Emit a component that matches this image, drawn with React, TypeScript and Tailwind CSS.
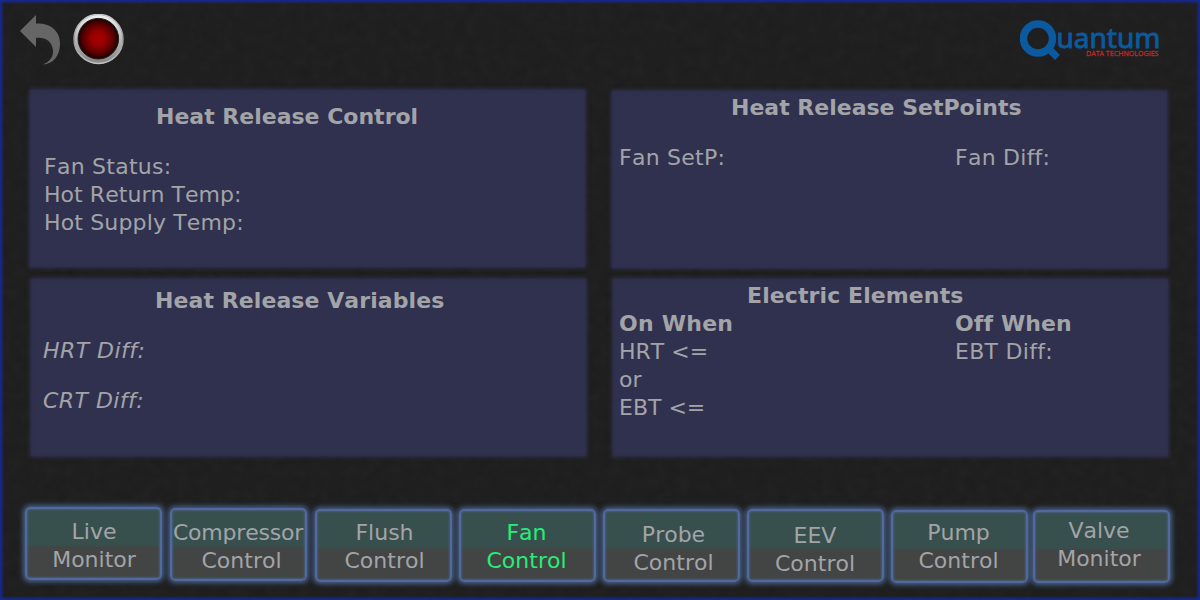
import React from "react";

type NavItem = { lines: [string, string]; box: string; text: string; first?: string };

const navItems: NavItem[] = [
  { lines: ["Live", "Monitor"], box: "mt-0", text: "pt-[9px] pl-px" },
  { lines: ["Compressor", "Control"], box: "mt-px ml-2", text: "pt-[9px] pl-1.5", first: "-ml-[7px] tracking-[-0.2px]" },
  { lines: ["Flush", "Control"], box: "mt-0.5 ml-2", text: "pt-2 pl-0.5" },
  { lines: ["Fan", "Control"], box: "mt-0.5 ml-[7px]", text: "pt-2 pr-0.5 text-[#25ee78]" },
  { lines: ["Probe", "Control"], box: "mt-0.5 ml-[7px]", text: "pt-2.5 pl-1" },
  { lines: ["EEV", "Control"], box: "mt-0.5 ml-[7px]", text: "pt-[11px] pr-px" },
  { lines: ["Pump", "Control"], box: "mt-[3px] ml-[7px]", text: "pt-[7px] pr-0.5" },
  { lines: ["Valve", "Monitor"], box: "mt-[3px] ml-[5px]", text: "pt-[5px] pr-[5px]" },
];

function NavButton({ item }: { item: NavItem }) {
  return (
    <button
      className={`h-[73px] w-[137px] shrink-0 rounded-[5px] border-2 border-[#52699e] bg-[linear-gradient(#37504d_0,#37504d_35px,#424544_39px,#424544_100%)] shadow-[0_0_5px_2px_#48628c,inset_0_0_2px_1px_#485d7c] text-center whitespace-nowrap ${item.box}`}
    >
      <span className={`flex h-full flex-col items-center ${item.text}`}>
        <span className={item.first ?? ""}>{item.lines[0]}</span>
        <span>{item.lines[1]}</span>
      </span>
    </button>
  );
}

function Panel({ className, children }: { className: string; children: React.ReactNode }) {
  return (
    <section className={`h-[177px] w-[555px] bg-[#30314f] shadow-[0_0_4px_1px_#30314f,inset_0_0_3px_#2b2b43] ${className}`}>
      {children}
    </section>
  );
}

export default function App() {
  return (
    <main className="relative isolate h-[600px] w-[1200px] overflow-hidden bg-[#1d1d1d] font-['DejaVu_Sans',sans-serif] text-[22px] leading-7 text-[#a3a4a8] [font-kerning:none] [font-variant-ligatures:none]">
      <svg className="absolute inset-0 -z-10 h-full w-full opacity-[0.03]" aria-hidden="true">
        <filter id="grain">
          <feTurbulence type="fractalNoise" baseFrequency="0.09" numOctaves="4" seed="4" />
          <feColorMatrix type="saturate" values="0" />
        </filter>
        <rect width="1200" height="600" filter="url(#grain)" />
      </svg>
      <div className="flex h-full flex-col shadow-[inset_0_0_2px_2.5px_#182888]">
        <header className="flex h-[90px] shrink-0 items-start justify-between pr-[35px] pl-5">
          <div className="flex">
            <svg className="mt-3.5 h-[52px] w-[42px]" viewBox="0 0 42 52" fill="#666">
              <path d="M0 17 16 1v8.500c14-.5 24 7 24 20C40 42 33 50 23 50.500c7-3 10.500-8 10-14C32 27 25 23 16 24v9Z" />
            </svg>
            <svg className="mt-3.5 ml-[11px] h-[51px] w-[51px]" viewBox="0 0 51 51">
              <defs>
                <linearGradient id="rim" x1="0" y1="0" x2="0" y2="1">
                  <stop stopColor="#f2f2f2" />
                  <stop offset=".5" stopColor="#b8b8b8" />
                  <stop offset="1" stopColor="#858585" />
                </linearGradient>
                <linearGradient id="rimEdge" x1="0" y1="0" x2="0" y2="1">
                  <stop stopColor="#c8c8c8" />
                  <stop offset=".5" stopColor="#999" />
                  <stop offset="1" stopColor="#c4c4c4" />
                </linearGradient>
                <radialGradient id="lamp">
                  <stop stopColor="#a60000" />
                  <stop offset=".35" stopColor="#980000" />
                  <stop offset=".8" stopColor="#4c0000" />
                  <stop offset="1" stopColor="#180000" />
                </radialGradient>
              </defs>
              <circle cx="25.5" cy="25" r="24.5" fill="url(#rim)" stroke="url(#rimEdge)" strokeWidth="1.5" />
              <circle cx="25.3" cy="24.7" r="20.3" fill="url(#lamp)" stroke="#202020" />
            </svg>
          </div>
          <svg className="mt-4 h-12 w-[146px] overflow-visible" viewBox="0 0 146 48">
            <circle cx="19" cy="22.5" r="14.5" fill="none" stroke="#0b5a9f" strokeWidth="7.5" />
            <path d="m28 31 10.500 10.500" stroke="#0b5a9f" strokeWidth="7" />
            <text
              x="37.5"
              y="31.5"
              textLength="104"
              lengthAdjust="spacingAndGlyphs"
              fill="#0b5a9f"
              stroke="#0b5a9f"
              strokeWidth=".9"
              className="font-['Noto_Sans',sans-serif] text-[28px]"
            >
              uantum
            </text>
            <text
              x="67"
              y="40"
              textLength="72.5"
              lengthAdjust="spacingAndGlyphs"
              fill="#b8282c"
              stroke="#b8282c"
              strokeWidth=".35"
              className="font-['Open_Sans',sans-serif] text-[8px]"
            >
              DATA TECHNOLOGIES
            </text>
          </svg>
        </header>

        <div className="flex h-[415px] shrink-0 pl-[30px]">
          <div className="w-[582px]">
            <Panel className="pt-[13px]">
              <h2 className="pl-[126px] font-bold">Heat Release Control</h2>
              <div className="mt-[22px] pl-3.5">
                <p className="tracking-[0.25px]">Fan Status:</p>
                <p className="tracking-[0.05px]">Hot Return Temp:</p>
                <p className="tracking-[0.15px]">Hot Supply Temp:</p>
              </div>
            </Panel>
            <Panel className="mt-3 ml-px pt-2">
              <h2 className="pl-[124px] font-bold tracking-[0.08px]">Heat Release Variables</h2>
              <div className="mt-[22px] space-y-[22px] pl-3 tracking-[0.45px] italic">
                <p>HRT Diff:</p>
                <p>CRT Diff:</p>
              </div>
            </Panel>
          </div>
          <div>
            <Panel className="mt-px pt-[3px]">
              <h2 className="pl-[119px] font-bold">Heat Release SetPoints</h2>
              <div className="mt-[22px] flex pl-[7px] tracking-[0.25px]">
                <p className="w-[336px]">Fan SetP:</p>
                <p>Fan Diff:</p>
              </div>
            </Panel>
            <Panel className="mt-[11px] ml-px pt-[3px]">
              <h2 className="pl-[134px] font-bold tracking-[0.1px]">Electric Elements</h2>
              <div className="flex pl-1.5">
                <div className="w-[336px]">
                  <h3 className="font-bold tracking-[0.25px]">On When</h3>
                  <p>HRT &lt;=</p>
                  <p>or</p>
                  <p>EBT &lt;=</p>
                </div>
                <div>
                  <h3 className="font-bold tracking-[0.1px]">Off When</h3>
                  <p className="tracking-[0.3px]">EBT Diff:</p>
                </div>
              </div>
            </Panel>
          </div>
        </div>

        <nav className="flex items-start pt-0.5 pl-[25px]">
          {navItems.map((item) => (
            <NavButton key={item.lines.join("-")} item={item} />
          ))}
        </nav>
      </div>
    </main>
  );
}
